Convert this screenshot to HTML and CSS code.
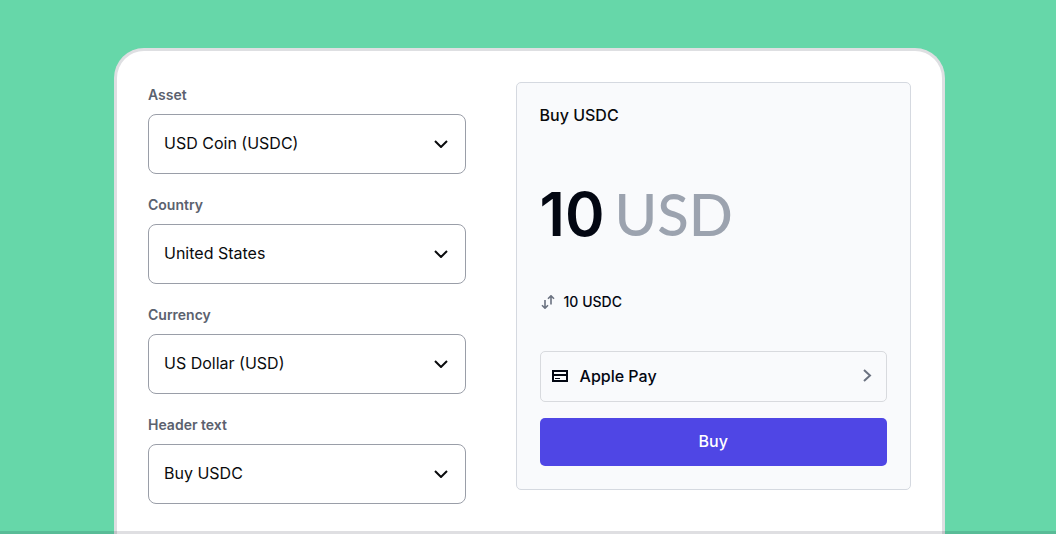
FILE: index.html
```html
<!DOCTYPE html>
<html lang="en">
<head>
    <meta charset="utf-8">
    <meta name="viewport" content="width=device-width, initial-scale=1">
    <title>Buy USDC</title>
    <link rel="stylesheet" href="styles.css">
</head>
<body>
    <main class="page">
        <div class="card">
            <form class="settings">
                <div class="field">
                    <label for="asset">Asset</label>
                    <div class="select-box">
                        <select id="asset">
                            <option>USD Coin (USDC)</option>
                        </select>
                        <svg class="chevron" viewBox="0 0 14 8" aria-hidden="true"><path d="M1 1l6 6 6-6"/></svg>
                    </div>
                </div>
                <div class="field">
                    <label for="country">Country</label>
                    <div class="select-box">
                        <select id="country">
                            <option>United States</option>
                        </select>
                        <svg class="chevron" viewBox="0 0 14 8" aria-hidden="true"><path d="M1 1l6 6 6-6"/></svg>
                    </div>
                </div>
                <div class="field">
                    <label for="currency">Currency</label>
                    <div class="select-box">
                        <select id="currency">
                            <option>US Dollar (USD)</option>
                        </select>
                        <svg class="chevron" viewBox="0 0 14 8" aria-hidden="true"><path d="M1 1l6 6 6-6"/></svg>
                    </div>
                </div>
                <div class="field">
                    <label for="header-text">Header text</label>
                    <div class="select-box">
                        <select id="header-text">
                            <option>Buy USDC</option>
                        </select>
                        <svg class="chevron" viewBox="0 0 14 8" aria-hidden="true"><path d="M1 1l6 6 6-6"/></svg>
                    </div>
                </div>
            </form>

            <section class="widget">
                <h1>Buy USDC</h1>
                <p class="amount">10 <span class="unit">USD</span></p>
                <p class="converted">
                    <svg class="swap" viewBox="0 0 14 14" aria-hidden="true"><path d="M4 5v8M1 10.200l3 3 3-3M10 9.500V1M7 3.800l3-3 3 3"/></svg>
                    10 USDC
                </p>
                <button type="button" class="method">
                    <svg class="credit" viewBox="0 0 16 12" aria-hidden="true"><path d="M1 1h14v10H1z"/><path d="M1 5h14"/><path class="thin" d="M3 8.500h5"/></svg>
                    <span class="method-name">Apple Pay</span>
                    <svg class="arrow" viewBox="0 0 9 13" aria-hidden="true"><path d="M1 1l6 5.500-6 5.500"/></svg>
                </button>
                <button type="button" class="buy">Buy</button>
            </section>
        </div>
    </main>
</body>
</html>
```
FILE: styles.css
```css
* {
    box-sizing: border-box;
}
body {
    margin: 0;
    background-color: #66d7a9;
    font-family: Inter, "Liberation Sans", sans-serif;
    color: #0a0b0d;
}
.page {
    position: relative;
    display: flex;
    height: 100vh;
    padding: 48px 111px 0 114px;
    overflow: hidden;
}
/* divider along the bottom edge, drawn over the card */
.page::after {
    content: "";
    position: absolute;
    left: 0;
    right: 0;
    bottom: 0;
    height: 3px;
    background-color: rgba(10, 11, 30, 0.13);
}
.card {
    flex: 1;
    display: grid;
    grid-template-columns: 318fr 396fr;
    align-items: start;
    gap: 50px;
    padding: 31px 31px 0;
    background-color: white;
    border: 3px solid #dedfe2;
    border-bottom: none;
    border-radius: 30px 30px 0 0;
}
.settings {
    display: flex;
    flex-direction: column;
    gap: 21px;
    padding-top: 3px;
}
.field {
    display: flex;
    flex-direction: column;
    gap: 9px;
}
label {
    font-size: 14px;
    line-height: 20px;
    font-weight: 600;
    color: #5b616e;
}
.select-box {
    position: relative;
}
select {
    appearance: none;
    display: block;
    width: 100%;
    height: 60px;
    padding: 0 48px 2px 15px;
    border: 1px solid #9a9ea8;
    border-radius: 8px;
    background-color: white;
    color: #0a0b0d;
    font-family: inherit;
    font-size: 16px;
}
svg {
    fill: none;
    stroke: currentColor;
    stroke-width: 2;
}
.chevron {
    position: absolute;
    top: 26px;
    right: 18px;
    width: 14px;
    height: 8px;
    pointer-events: none;
}
.widget {
    display: flex;
    flex-direction: column;
    padding: 22px 23px 23px;
    background-color: #f9fafc;
    border: 1px solid #d5d9e0;
    border-radius: 5px;
}
h1,
p {
    margin: 0;
}
h1 {
    font-size: 16px;
    line-height: 20px;
    font-weight: 500;
}
.amount {
    display: flex;
    align-items: baseline;
    gap: 10px;
    height: 60px;
    margin-top: 59px;
    font-size: 60px;
    line-height: 60px;
    font-weight: 600;
    color: #030712;
}
.unit {
    font-family: Lato, Inter, sans-serif;
    font-size: 58px;
    font-weight: 500;
    color: #9ca3af;
}
.converted {
    display: flex;
    align-items: center;
    gap: 9px;
    margin-top: 48px;
    padding-left: 1px;
    font-size: 14px;
    line-height: 20px;
    font-weight: 500;
    color: #030712;
}
.swap {
    width: 14px;
    height: 14px;
    color: #6b7280;
    stroke-width: 1.6;
}
button {
    font-family: inherit;
    font-size: 16px;
    font-weight: 500;
    cursor: pointer;
}
.method {
    display: flex;
    align-items: center;
    gap: 12px;
    height: 51px;
    margin-top: 39px;
    padding: 0 14px 2px 11px;
    background-color: #f9fafc;
    border: 1px solid #d8dade;
    border-radius: 5px;
    color: #030712;
}
.method-name {
    flex: 1;
    text-align: left;
}
.credit {
    width: 16px;
    height: 12px;
}
.thin {
    stroke-width: 1;
}
.arrow {
    width: 9px;
    height: 13px;
    color: #6b7280;
}
.buy {
    height: 48px;
    margin-top: 16px;
    padding-bottom: 3px;
    background-color: #4f46e5;
    border: none;
    border-radius: 5px;
    color: white;
}
```
